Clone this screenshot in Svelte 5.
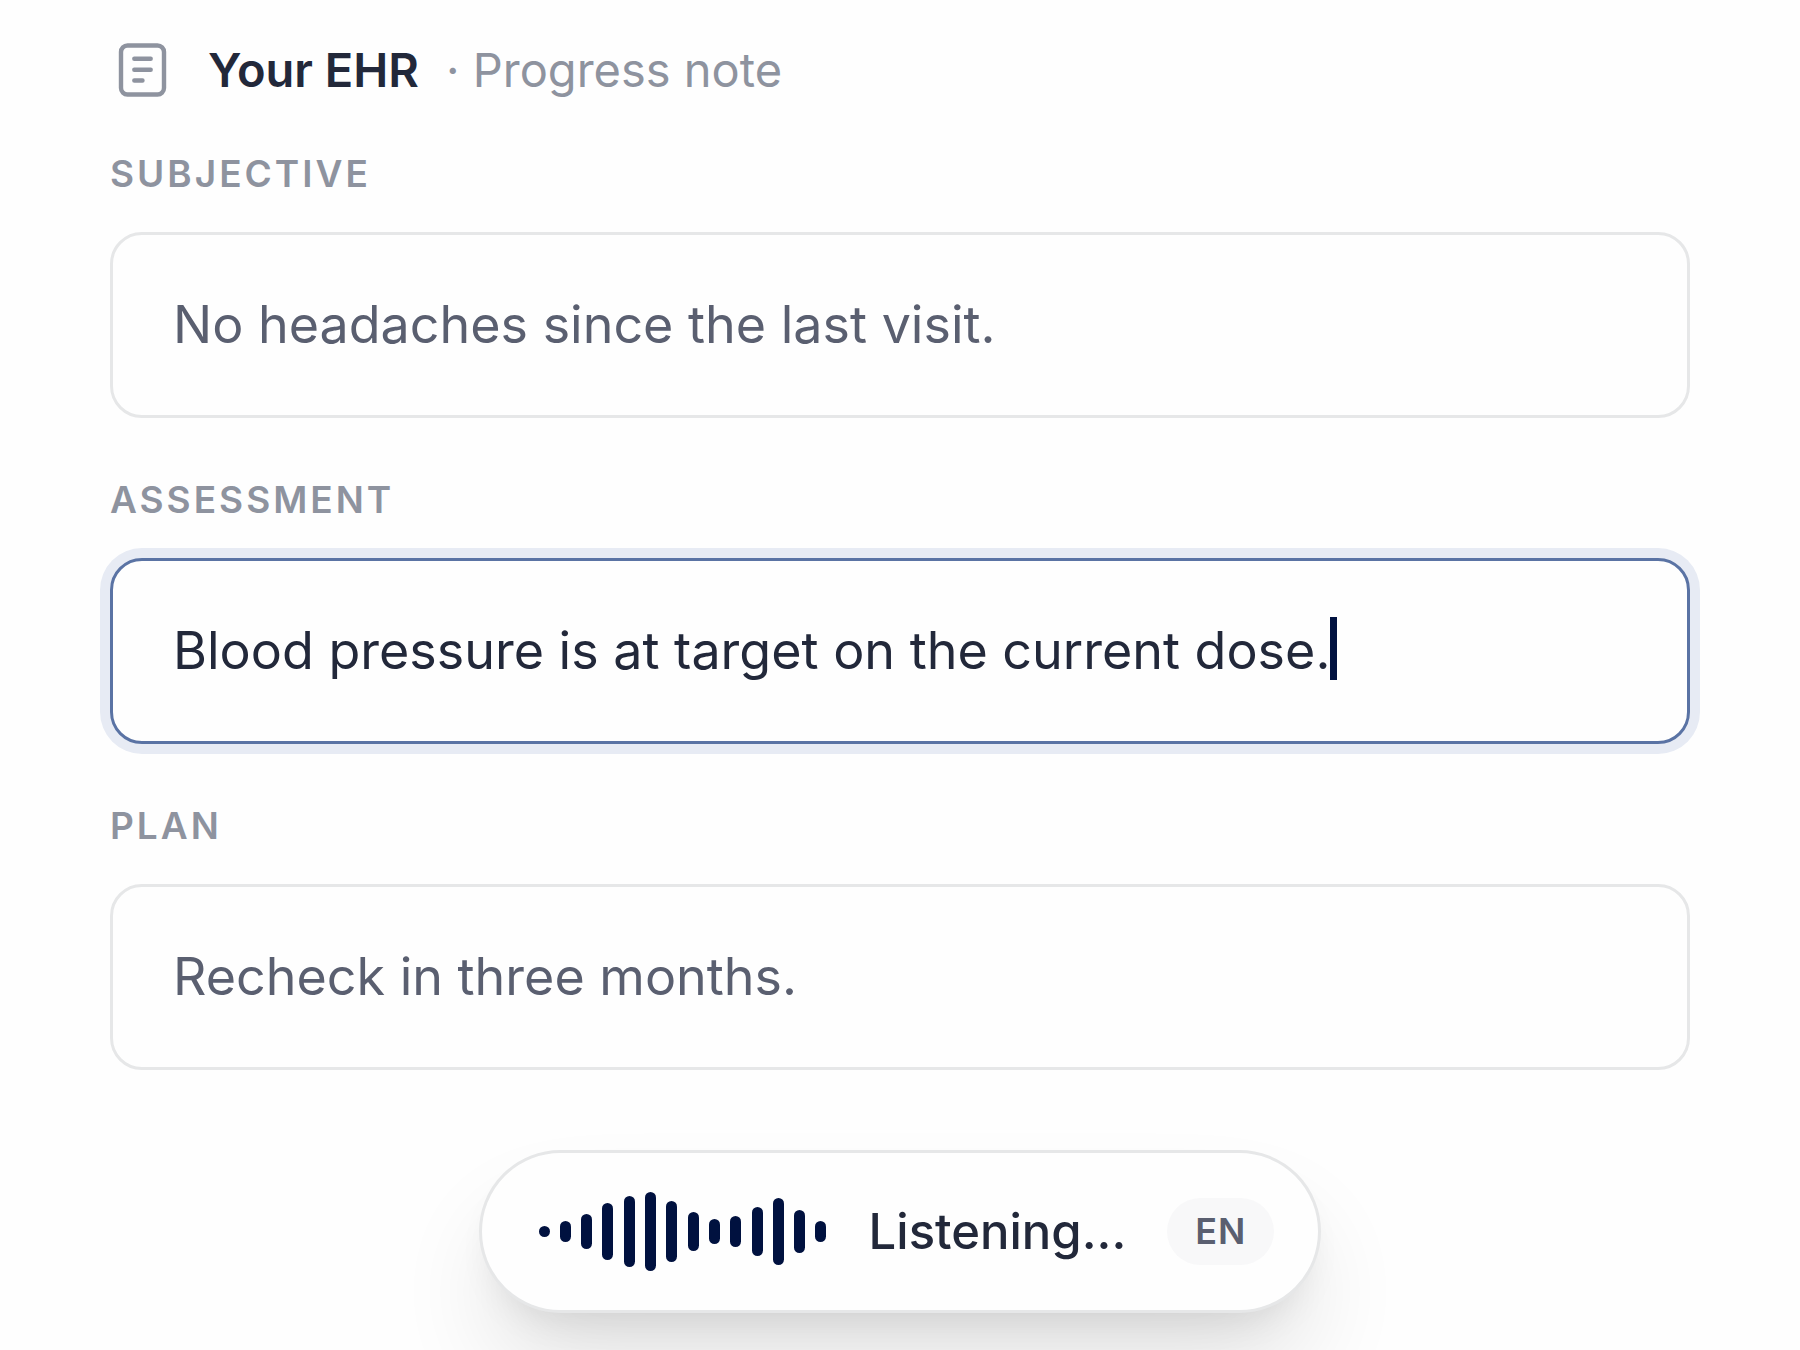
<script>
  const fields = $state([
    { id: "subjective", label: "Subjective", text: "No headaches since the last visit.", active: false },
    { id: "assessment", label: "Assessment", text: "Blood pressure is at target on the current dose.", active: true },
    { id: "plan", label: "Plan", text: "Recheck in three months.", active: false }
  ]);

  const bars = [11, 21, 35, 57, 71, 79, 61, 39, 25, 31, 49, 67, 43, 21];
</script>

<main class="note">
  <header class="note-header">
    <svg class="note-icon" viewBox="0 0 64 64" fill="none" aria-hidden="true">
      <rect x="11" y="7.5" width="43" height="49" rx="6.5" />
      <path d="M24.3 20.7h16.4M24.3 31.7h16.4M24.3 42.5h8.2" />
    </svg>
    <h1>Your EHR</h1>
    <span class="note-type">· Progress note</span>
  </header>

  <form class="fields">
    {#each fields as field}
      <div class="field">
        <label for={field.id}>{field.label}</label>
        <div class="box" class:active={field.active}>
          <input id={field.id} type="text" autocomplete="off" bind:value={field.text} />
          {#if field.active}
            <span class="caret"></span>
          {/if}
        </div>
      </div>
    {/each}
  </form>

  <div class="listener" role="status">
    <div class="wave" aria-hidden="true">
      {#each bars as height}
        <span class="bar" style="height: {height}px"></span>
      {/each}
    </div>
    <span class="listener-text">Listening...</span>
    <span class="lang">EN</span>
  </div>
</main>

<style>
  :global(body) {
    background: #fefefe;
  }

  .note {
    display: flex;
    flex-direction: column;
    box-sizing: border-box;
    min-height: 100vh;
    padding: 38px 110px 37px;
    overflow: hidden;
    font-family: Inter, "Liberation Sans", sans-serif;
    color: #22283a;
  }

  .note-header {
    display: flex;
    align-items: center;
    font-size: 47px;
    line-height: 64px;
  }

  .note-icon {
    width: 64px;
    height: 64px;
    margin-right: 34px;
    stroke: #8e939f;
    stroke-width: 4.4;
    stroke-linecap: round;
  }

  h1 {
    margin: 0 27px 0 0;
    font-size: 47px;
    font-weight: 600;
  }

  .note-type {
    color: #8e939f;
  }

  .fields {
    display: flex;
    flex-direction: column;
    gap: 58px;
    margin-top: 48px;
  }

  .field {
    display: flex;
    flex-direction: column;
    gap: 34px;
  }

  label {
    align-self: flex-start;
    font-size: 37px;
    font-weight: 600;
    line-height: 48px;
    letter-spacing: 3px;
    text-transform: uppercase;
    color: #8e939f;
  }

  .box {
    display: flex;
    align-items: flex-start;
    padding: 56px 60px;
    border: 3px solid #e6e7e8;
    border-radius: 32px;
    background: #fefefe;
  }

  input {
    flex: 1;
    min-width: 0;
    height: 68px;
    padding: 0;
    border: 0;
    outline: 0;
    background: none;
    font-family: inherit;
    font-size: 52px;
    line-height: 68px;
    color: #5a5f70;
  }

  .active {
    border-color: #5a73a4;
    box-shadow: 0 0 0 10px #e7ebf4;
  }

  .active input {
    flex: none;
    field-sizing: content;
    max-width: 100%;
    color: #22283a;
  }

  .caret {
    width: 7px;
    height: 63px;
    background: #00113f;
  }

  .listener {
    display: flex;
    align-items: center;
    align-self: center;
    box-sizing: border-box;
    height: 163px;
    margin-top: 80px;
    padding: 0 44px 0 57px;
    border: 3px solid #e6e7e8;
    border-radius: 82px;
    background: #fefefe;
    box-shadow: 0 60px 100px -12px rgba(0, 0, 0, 0.12), 0 20px 40px -20px rgba(0, 0, 0, 0.12);
  }

  .wave {
    display: flex;
    align-items: center;
    justify-content: space-between;
    width: 288px;
    margin-right: 42px;
  }

  .bar {
    width: 11px;
    border-radius: 6px;
    background: #00113f;
  }

  .listener-text {
    margin-right: 41px;
    font-size: 49px;
    font-weight: 500;
    line-height: 64px;
  }

  .lang {
    padding: 0 28px;
    border-radius: 34px;
    background: #f8f8f9;
    font-size: 36px;
    font-weight: 600;
    line-height: 67px;
    letter-spacing: 1px;
    color: #5a5f70;
  }
</style>
